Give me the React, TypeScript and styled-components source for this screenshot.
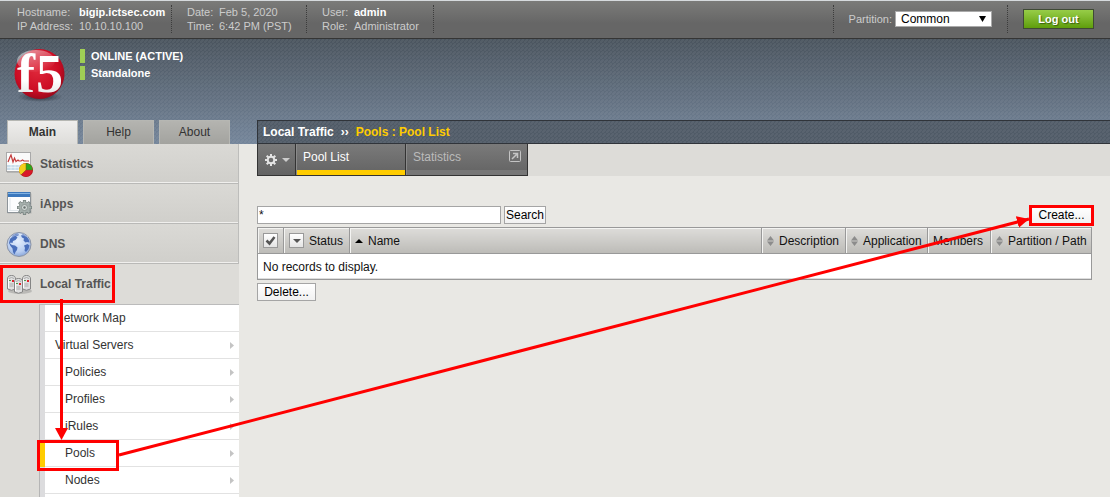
import React from "react";
import styled, { createGlobalStyle, css } from "styled-components";

const GlobalStyle = createGlobalStyle`
  *, *::before, *::after { box-sizing: border-box; }
  body {
    margin: 0;
    background: #e9e8e4;
    font-family: "Liberation Sans", Arial, sans-serif;
    font-size: 12px;
    line-height: 14px;
    color: #111;
  }
  button, input, select { font: inherit; color: inherit; margin: 0; }
  a { color: inherit; text-decoration: none; }
  ul { list-style: none; margin: 0; padding: 0; }
`;

const stripe =
  "linear-gradient(135deg, transparent 37%, rgba(255, 255, 255, 0.05) 37% 63%, transparent 63%) 0 0 / 4px 4px";

const Page = styled.div`
  position: relative;
  display: flex;
  flex-direction: column;
  min-height: 100vh;
  overflow: hidden;
`;

/* ---------- top bar ---------- */

const TopBar = styled.header`
  display: flex;
  align-items: flex-start;
  height: 39px;
  padding: 4px 16px 0 17px;
  border-top: 1px solid #d6dadd;
  border-bottom: 1px solid #353535;
  background: linear-gradient(#7b7b79, #666 60%);
  color: #ccc;
  font-size: 11px;
`;

const InfoTable = styled.dl<{ $label: number; $width: number }>`
  display: grid;
  grid-template-columns: ${(p) => p.$label}px 1fr;
  width: ${(p) => p.$width}px;
  height: 28px;
  margin: 0 15px 0 0;
  border-right: 1px dotted #3c3c3c;
  white-space: nowrap;
  dd { margin: 0; }
  strong { color: #fff; }
`;

const PartitionBox = styled.div`
  display: flex;
  align-items: center;
  gap: 3px;
  height: 28px;
  margin-left: auto;
  padding: 0 15px;
  border: 1px dotted #3c3c3c;
  border-width: 0 1px;
`;

const SelectWrap = styled.span`
  position: relative;
  display: flex;
  svg {
    position: absolute;
    right: 6px;
    top: 5px;
    pointer-events: none;
  }
`;

const PartitionSelect = styled.select`
  appearance: none;
  width: 97px;
  height: 16px;
  padding: 0 5px;
  border: 1px solid #aaa;
  border-radius: 0;
  background: #fff;
  color: #000;
  font-size: 12px;
  line-height: 14px;
`;

const LogoutButton = styled.button`
  width: 71px;
  height: 20px;
  margin: 4px 0 0 15px;
  padding: 0;
  border: 1px solid #3f4a35;
  background: linear-gradient(#97cd48, #5f9e0c);
  color: #fff;
  font-weight: bold;
  text-shadow: 1px 1px 1px #3b5f10;
`;

/* ---------- banner ---------- */

const Banner = styled.div`
  display: flex;
  height: 105px;
  background: ${stripe}, linear-gradient(#4a545e, #74859a);
`;

const Brand = styled.div`
  display: flex;
  flex-direction: column;
  justify-content: space-between;
  flex: 0 0 257px;
`;

const BrandTop = styled.div`
  display: flex;
  gap: 14px;
  padding: 8px 0 0 12px;
`;

const LogoSvg = styled.svg`
  overflow: visible;
`;

const StatusList = styled.div`
  display: flex;
  flex-direction: column;
  gap: 3px;
  padding-top: 2px;
  color: #fff;
  font-size: 11px;
  font-weight: bold;
`;

const StatusLine = styled.div`
  padding-left: 6px;
  border-left: 5px solid #9fce55;
`;

const MainTabs = styled.nav`
  display: flex;
  gap: 5px;
  padding-left: 7px;
`;

const MainTab = styled.a<{ $active?: boolean }>`
  width: 71px;
  height: 24px;
  border: 1px solid #b6b7b3;
  border-bottom: 0;
  background: ${(p) => (p.$active ? "linear-gradient(#eeedec, #dedddA)" : "linear-gradient(#b4b4b0, #a3a39f)")};
  color: #333;
  font-weight: ${(p) => (p.$active ? "bold" : "normal")};
  line-height: 22px;
  text-align: center;
`;

const Breadcrumb = styled.div`
  flex: 1;
  align-self: flex-end;
  height: 24px;
  padding-left: 5px;
  border: 1px solid #30343a;
  border-right: 0;
  background: ${stripe}, #505b67;
  color: #ffcc00;
  font-weight: bold;
  line-height: 22px;
  white-space: pre;
  a { color: #fff; }
  span { color: #fff; padding: 0 7px; }
`;

/* ---------- sidebar ---------- */

const Body = styled.div`
  display: flex;
  flex: 1;
`;

const Sidebar = styled.nav`
  display: flex;
  flex-direction: column;
  flex: 0 0 239px;
  background: #dddcd8;
`;

const NavItem = styled.a<{ $open?: boolean }>`
  position: relative;
  display: flex;
  align-items: center;
  gap: 6px;
  height: 40px;
  padding-left: 6px;
  color: #555;
  font-weight: bold;
  ${(p) =>
    !p.$open &&
    css`
      border-right: 1px solid #bdbdbb;
      border-bottom: 1px solid #b9b9b7;
      box-shadow: inset 0 -1px #f0efed;
      background: linear-gradient(#dad9d5, #d0cfcb);
    `}
`;

const SubMenu = styled.ul`
  flex: 1;
  margin-left: 39px;
  border-top: 1px solid #bbb;
  border-left: 1px solid #b5b5b5;
  background: #fff;
  box-shadow: inset 5px 0 #dcdcde;
`;

const SubItem = styled.li<{ $active?: boolean }>`
  position: relative;
  height: 27px;
  border-left: 5px solid ${(p) => (p.$active ? "#ffcc00" : "#dcdcde")};
`;

const SubLink = styled.a<{ $nested?: boolean }>`
  display: flex;
  align-items: center;
  justify-content: space-between;
  height: 27px;
  padding: 0 5px 0 ${(p) => (p.$nested ? 20 : 10)}px;
  border-bottom: 1px solid #e2e2e2;
  color: #333;
`;

/* ---------- content ---------- */

const Content = styled.main`
  flex: 1;
  padding-left: 18px;
`;

const TabStrip = styled.div`
  display: flex;
  height: 32px;
  background: #dddcd8;
`;

const StripItem = css`
  height: 32px;
  border: 0 solid #333;
  border-width: 0 1px 1px 0;
  background: linear-gradient(#7a7a7a, #636363);
`;

const GearButton = styled.button`
  ${StripItem}
  display: flex;
  align-items: center;
  justify-content: space-between;
  width: 39px;
  border-left-width: 1px;
  padding: 0 5px 0 6px;
`;

const StripTab = styled.a<{ $width: number; $active?: boolean }>`
  ${StripItem}
  display: flex;
  align-items: flex-start;
  justify-content: space-between;
  width: ${(p) => p.$width}px;
  padding: 6px 6px 0 7px;
  box-shadow: inset 1px 0 #8a8a8a, inset 0 -5px ${(p) => (p.$active ? "#ffcc00" : "#777")};
  color: ${(p) => (p.$active ? "#fff" : "#bbb")};
`;

const ListArea = styled.form`
  padding: 30px 18px 0 0;
`;

const Toolbar = styled.div`
  display: flex;
  gap: 3px;
  margin-bottom: 3px;
`;

const FilterInput = styled.input`
  width: 244px;
  height: 18px;
  padding: 0 1px;
  border: 1px solid #a5a5a5;
  background: #fff;
`;

const Button = styled.button<{ $width: number }>`
  width: ${(p) => p.$width}px;
  height: 18px;
  padding: 0;
  border: 1px solid #a5a5a5;
  background: linear-gradient(#fff, #f1f1f1);
  color: #000;
  line-height: 16px;
`;

const CreateSlot = styled.div`
  position: relative;
  margin-left: auto;
`;

const PoolTable = styled.table`
  width: 100%;
  table-layout: fixed;
  border-collapse: collapse;
  margin-bottom: 3px;
  border: 1px solid #999;
  background: #fff;
  white-space: nowrap;
`;

const HeadCell = styled.th`
  height: 26px;
  padding: 0 0 0 5px;
  border: 1px solid #999;
  background: linear-gradient(#dddcd9, #bcbbb7);
  box-shadow: inset 1px 1px #f4f4f2;
  font-weight: normal;
  text-align: left;
`;

const HeadContent = styled.span`
  display: flex;
  align-items: center;
  gap: 5px;
`;

const EmptyCell = styled.td`
  height: 26px;
  padding: 0 5px;
  box-shadow: inset 0 -1px #ddd;
`;

const CheckWrap = styled.label`
  display: grid;
  width: 15px;
  height: 15px;
  > * { grid-area: 1 / 1; }
  svg { pointer-events: none; }
`;

const CheckInput = styled.input`
  appearance: none;
  width: 15px;
  height: 15px;
  border: 1px solid #999;
  background: linear-gradient(#fff, #e4e4e4);
`;

const MenuButton = styled.button`
  display: flex;
  align-items: center;
  justify-content: center;
  width: 15px;
  height: 15px;
  padding: 0;
  border: 1px solid #999;
  background: linear-gradient(#fff, #e4e4e4);
`;

/* ---------- annotations ---------- */

const Highlight = styled.span<{ $l: number; $t: number; $w: number; $h: number }>`
  position: absolute;
  z-index: 2;
  left: ${(p) => p.$l}px;
  top: ${(p) => p.$t}px;
  width: ${(p) => p.$w}px;
  height: ${(p) => p.$h}px;
  border: 3px solid #f00;
  pointer-events: none;
`;

const DownArrow = styled.svg`
  position: absolute;
  z-index: 2;
  left: 55px;
  top: 299px;
  pointer-events: none;
`;

const LongArrow = styled.svg`
  position: absolute;
  z-index: 2;
  left: 119px;
  top: 219px;
  width: calc(100% - 200px);
  height: 236px;
  overflow: visible;
  pointer-events: none;
`;

/* ---------- drawings ---------- */

const Logo = () => (
  <LogoSvg width="54" height="56" viewBox="0 0 54 56" role="img" aria-label="f5">
    <defs>
      <radialGradient id="ball" cx="45%" cy="40%" r="62%">
        <stop offset="0" stopColor="#e02a3c" />
        <stop offset="0.7" stopColor="#cc0c24" />
        <stop offset="1" stopColor="#96091a" />
      </radialGradient>
      <radialGradient id="shade">
        <stop offset="0" stopColor="#222a33" stopOpacity="0.9" />
        <stop offset="1" stopColor="#222a33" stopOpacity="0" />
      </radialGradient>
      <linearGradient id="gloss" x1="0" y1="0" x2="0.6" y2="1">
        <stop offset="0" stopColor="#fff" stopOpacity="0.6" />
        <stop offset="1" stopColor="#fff" stopOpacity="0" />
      </linearGradient>
      <linearGradient id="letters" x1="0" y1="0" x2="0" y2="1">
        <stop offset="0.6" stopColor="#fff" />
        <stop offset="1" stopColor="#d8d8d8" />
      </linearGradient>
    </defs>
    <ellipse cx="28" cy="50" rx="23" ry="5" fill="url(#shade)" />
    <circle cx="27.500" cy="27" r="25" fill="url(#ball)" />
    <ellipse cx="24" cy="14" rx="19" ry="11" fill="url(#gloss)" />
    <g fontFamily="Liberation Serif, serif" fontWeight="bold" fontSize="54" fill="url(#letters)">
      <text x="5" y="45">f</text>
      <text x="24" y="45">5</text>
    </g>
  </LogoSvg>
);

const StatisticsIcon = () => (
  <svg width="28" height="28" viewBox="0 0 28 28">
    <rect x="1" y="3" width="24" height="20" fill="#999" opacity="0.5" />
    <rect x="0.500" y="2.500" width="24" height="19" fill="#fafafa" stroke="#a9a9a9" />
    <rect x="1" y="15" width="23" height="5" fill="#c9ddea" />
    <path d="M1 17.500h23M5 15v5M9 15v5M13 15v5" stroke="#fff" strokeWidth="0.500" />
    <path d="M2 12l2-5 1-2 2 7 1.500-4 1.500 3.500 2-1.500 1 1h2l1.500-1 1.500 1h5" fill="none" stroke="#c43c3c" strokeWidth="1.200" />
    <circle cx="20" cy="20" r="7" fill="#b01515" />
    <circle cx="20" cy="20" r="6.500" fill="#d9182a" />
    <path d="M20 20V13.200A6.800 6.800 0 0 1 26.800 20z" fill="#2ba71e" />
    <path d="M20 20V13.200A6.800 6.800 0 0 0 15 24.800z" fill="#f2cf1b" />
    <path d="M20 13v7h7M20 20l-5 5" fill="none" stroke="#7a5a10" strokeWidth="0.500" />
  </svg>
);

const AppsIcon = () => (
  <svg width="28" height="28" viewBox="0 0 28 28">
    <rect x="1.500" y="3.500" width="24" height="20" fill="#888" opacity="0.4" />
    <rect x="1.500" y="2.500" width="23" height="20" fill="#fcfdfe" stroke="#8d9499" />
    <rect x="2" y="2" width="22" height="5" fill="#3b78bd" />
    <path d="M2 3.500h22" stroke="#81b2e2" />
    <path d="M4 8v13M3 20.500h13" stroke="#e0e6ea" />
    <g transform="translate(18.500 17.500)">
      <path d="M0-7.500V7.500M-7.500 0H7.500M-5.300-5.300L5.300 5.300M5.300-5.300L-5.300 5.300" stroke="#77827f" strokeWidth="3.200" />
      <circle r="5.400" fill="#a3adaa" stroke="#77827f" strokeWidth="0.800" />
      <path d="M0-6.800V-4M0 6.800V4M-6.800 0H-4M6.800 0H4M-4.800-4.800L-3-3M4.800 4.800L3 3M4.800-4.800L3-3M-4.800 4.800L-3 3" stroke="#a9b3b0" strokeWidth="1.800" />
      <circle r="3" fill="#d2d8d6" stroke="#818b88" strokeWidth="0.800" />
      <circle r="1.200" fill="#69726f" />
    </g>
  </svg>
);

const GlobeIcon = () => (
  <svg width="28" height="28" viewBox="0 0 28 28">
    <defs>
      <radialGradient id="sea" cx="45%" cy="35%" r="65%">
        <stop offset="0" stopColor="#e6effc" />
        <stop offset="0.7" stopColor="#b9cef1" />
        <stop offset="1" stopColor="#8ba8dc" />
      </radialGradient>
    </defs>
    <circle cx="13" cy="14.500" r="12" fill="url(#sea)" stroke="#8a93a5" />
    <path
      fill="#4a6fbb"
      d="M4 9l3-4 4-1.500 2 .5-.5 1.500-2.500 1 1.500 1-2 2.500-2.500 1-.5 2-2-.5-.5 1 2 1.500 3 .5 2.500 2-.5 2.500-1.500 2-1 2.500-1.500-2.500-.5-3.500-2-2.500-1.500-3zM15 5.500l2-1.500 3.500 2 2.500 4 .5 2.500-2.500-.5-1.500.5-2-2 .5-2-2-1zM18 15.500l3.500-1.500 2 1.500-1 3.500-2.500 3-1.500-1.500.5-2.500z"
    />
    <path d="M4 8c5-4 12-5 18-1" fill="none" stroke="#fff" strokeOpacity="0.35" strokeWidth="1.500" />
  </svg>
);

const Server = ({ x, y }: { x: number; y: number }) => (
  <g transform={`translate(${x} ${y})`}>
    <path d="M.5 14V4C.5 1.500 2 .5 4.500.5S8.500 1.500 8.500 4V14Q4.500 16.500 .5 14z" fill="#e0e0e0" stroke="#858585" />
    <path d="M2 3.500Q4.500 1.500 7 3.500M2.500 9h4M2.500 11h4" fill="none" stroke="#aaa" />
    <path d="M1.500 4v9" stroke="#fff" />
    <rect x="5" y="5" width="2" height="2" fill="#e0222c" />
    <rect x="2" y="5" width="2" height="1" fill="#4c9e48" />
  </g>
);

const ServersIcon = () => (
  <svg width="28" height="28" viewBox="0 0 28 28">
    <ellipse cx="14" cy="21" rx="12" ry="3" fill="#777" opacity="0.35" />
    <Server x={1} y={5} />
    <Server x={16} y={5} />
    <Server x={8} y={8} />
  </svg>
);

const GearIcon = () => (
  <svg width="14" height="14" viewBox="-7 -7 14 14">
    <path d="M0-6V-3M0 6V3M-6 0H-3M6 0H3M-4.300-4.300L-2.500-2.500M4.300 4.300L2.500 2.500M4.300-4.300L2.500-2.500M-4.300 4.300L-2.500 2.500" stroke="#e4e4e4" strokeWidth="2" />
    <circle r="3.300" fill="none" stroke="#e4e4e4" strokeWidth="2" />
  </svg>
);

const Caret = ({ color, up }: { color: string; up?: boolean }) => (
  <svg width="8" height="4" viewBox="0 0 8 4">
    <path d={up ? "M0 4L4 0L8 4z" : "M0 0H8L4 4z"} fill={color} />
  </svg>
);

const SortIcon = () => (
  <svg width="7" height="10" viewBox="0 0 7 10">
    <path d="M0 4.500L3.500 0L7 4.500zM0 5.500H7L3.500 10z" fill="#8c8c8c" />
  </svg>
);

const RowArrow = () => (
  <svg width="4" height="7" viewBox="0 0 4 7">
    <path d="M0 0L4 3.500L0 7z" fill="#c4c4c4" />
  </svg>
);

const PopOutIcon = () => (
  <svg width="12" height="12" viewBox="0 0 12 12" fill="none" stroke="#c4c4c4">
    <rect x="0.500" y="0.500" width="11" height="11" rx="1" />
    <path d="M3 9L8 4M4 3.500H8.500V8" strokeWidth="1.500" />
  </svg>
);

const navItems = [
  { label: "Statistics", icon: <StatisticsIcon /> },
  { label: "iApps", icon: <AppsIcon /> },
  { label: "DNS", icon: <GlobeIcon /> },
];

const subItems = [
  { label: "Network Map", nested: false, arrow: false },
  { label: "Virtual Servers", nested: false, arrow: true },
  { label: "Policies", nested: true, arrow: true },
  { label: "Profiles", nested: true, arrow: true },
  { label: "iRules", nested: true, arrow: true },
  { label: "Pools", nested: true, arrow: true, active: true },
  { label: "Nodes", nested: true, arrow: true },
];

export default function App() {
  return (
    <Page>
      <GlobalStyle />
      <TopBar>
        <InfoTable $label={62} $width={155}>
          <dt>Hostname:</dt>
          <dd><strong>bigip.ictsec.com</strong></dd>
          <dt>IP Address:</dt>
          <dd>10.10.10.100</dd>
        </InfoTable>
        <InfoTable $label={32} $width={120}>
          <dt>Date:</dt>
          <dd>Feb 5, 2020</dd>
          <dt>Time:</dt>
          <dd>6:42 PM (PST)</dd>
        </InfoTable>
        <InfoTable $label={32} $width={112}>
          <dt>User:</dt>
          <dd><strong>admin</strong></dd>
          <dt>Role:</dt>
          <dd>Administrator</dd>
        </InfoTable>
        <PartitionBox>
          <label htmlFor="partition">Partition:</label>
          <SelectWrap>
            <PartitionSelect id="partition" defaultValue="Common">
              <option>Common</option>
            </PartitionSelect>
            <svg width="7" height="6" viewBox="0 0 7 6">
              <path d="M0 0H7L3.500 6z" fill="#000" />
            </svg>
          </SelectWrap>
        </PartitionBox>
        <LogoutButton type="button">Log out</LogoutButton>
      </TopBar>

      <Banner>
        <Brand>
          <BrandTop>
            <Logo />
            <StatusList>
              <StatusLine>ONLINE (ACTIVE)</StatusLine>
              <StatusLine>Standalone</StatusLine>
            </StatusList>
          </BrandTop>
          <MainTabs>
            <MainTab href="#main" $active>Main</MainTab>
            <MainTab href="#help">Help</MainTab>
            <MainTab href="#about">About</MainTab>
          </MainTabs>
        </Brand>
        <Breadcrumb>
          <a href="#local-traffic">Local Traffic</a>
          <span>››</span>
          Pools : Pool List
        </Breadcrumb>
      </Banner>

      <Body>
        <Sidebar>
          {navItems.map((item) => (
            <NavItem key={item.label} href={`#${item.label}`}>
              {item.icon}
              {item.label}
            </NavItem>
          ))}
          <NavItem href="#local-traffic" $open>
            <ServersIcon />
            Local Traffic
            <Highlight $l={0} $t={1} $w={115} $h={38} />
          </NavItem>
          <SubMenu>
            {subItems.map((item) => (
              <SubItem key={item.label} $active={item.active}>
                <SubLink href={`#${item.label}`} $nested={item.nested}>
                  {item.label}
                  {item.arrow && <RowArrow />}
                </SubLink>
                {item.active && <Highlight $l={-8} $t={0} $w={82} $h={31} />}
              </SubItem>
            ))}
          </SubMenu>
        </Sidebar>

        <Content>
          <TabStrip>
            <GearButton type="button" aria-label="Options">
              <GearIcon />
              <Caret color="#ccc" />
            </GearButton>
            <StripTab href="#pool-list" $width={110} $active>Pool List</StripTab>
            <StripTab href="#statistics" $width={122}>
              Statistics
              <PopOutIcon />
            </StripTab>
          </TabStrip>

          <ListArea onSubmit={(e) => e.preventDefault()}>
            <Toolbar>
              <FilterInput type="text" aria-label="Filter" defaultValue="*" />
              <Button type="submit" $width={42}>Search</Button>
              <CreateSlot>
                <Button type="button" $width={61}>Create...</Button>
                <Highlight $l={-2} $t={-1} $w={65} $h={21} />
              </CreateSlot>
            </Toolbar>

            <PoolTable>
              <colgroup>
                <col width="26" />
                <col width="66" />
                <col />
                <col width="84" />
                <col width="82" />
                <col width="63" />
                <col width="101" />
              </colgroup>
              <thead>
                <tr>
                  <HeadCell>
                    <CheckWrap>
                      <CheckInput type="checkbox" aria-label="Select all" />
                      <svg width="15" height="15" viewBox="0 0 15 15">
                        <path d="M3.500 7.500L6.500 10.500L11.500 4" fill="none" stroke="#555" strokeWidth="2.500" />
                      </svg>
                    </CheckWrap>
                  </HeadCell>
                  <HeadCell>
                    <HeadContent>
                      <MenuButton type="button" aria-label="Filter by status">
                        <Caret color="#555" />
                      </MenuButton>
                      Status
                    </HeadContent>
                  </HeadCell>
                  <HeadCell>
                    <HeadContent><Caret color="#000" up />Name</HeadContent>
                  </HeadCell>
                  <HeadCell>
                    <HeadContent><SortIcon />Description</HeadContent>
                  </HeadCell>
                  <HeadCell>
                    <HeadContent><SortIcon />Application</HeadContent>
                  </HeadCell>
                  <HeadCell>Members</HeadCell>
                  <HeadCell>
                    <HeadContent><SortIcon />Partition / Path</HeadContent>
                  </HeadCell>
                </tr>
              </thead>
              <tbody>
                <tr>
                  <EmptyCell colSpan={7}>No records to display.</EmptyCell>
                </tr>
              </tbody>
            </PoolTable>
            <Button type="button" $width={59}>Delete...</Button>
          </ListArea>
        </Content>
      </Body>

      <DownArrow width="13" height="141" viewBox="0 0 13 141">
        <path d="M6.500 0V132" stroke="#f00" strokeWidth="3" />
        <path d="M0 129H13L6.500 141z" fill="#f00" />
      </DownArrow>
      <LongArrow>
        <defs>
          <marker id="tip" markerUnits="userSpaceOnUse" markerWidth="13" markerHeight="12" refX="12" refY="6" orient="auto">
            <path d="M0 0L12 6L0 12z" fill="#f00" />
          </marker>
        </defs>
        <line x1="0" y1="100%" x2="100%" y2="0" stroke="#f00" strokeWidth="3" markerEnd="url(#tip)" />
      </LongArrow>
    </Page>
  );
}
